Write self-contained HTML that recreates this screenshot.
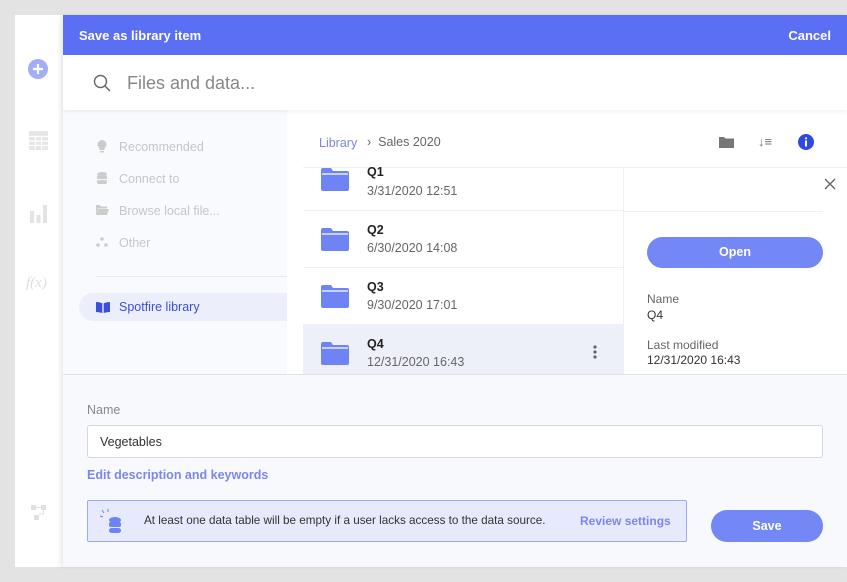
<!DOCTYPE html>
<html><head><meta charset="utf-8"><style>
*{box-sizing:border-box;margin:0;padding:0}
body{width:847px;height:582px;background:#e3e3e3;font-family:"Liberation Sans",Arial,sans-serif;position:relative;overflow:hidden}
.abs{position:absolute}
.side{left:15px;top:15px;width:48px;height:552px;background:#fff}
.dlg{left:63px;top:15px;width:784px;height:552px;background:#fff;box-shadow:-3px 0 4px rgba(0,0,0,.08)}
.hdr{left:0;top:0;width:784px;height:40px;background:#5b6ff5;color:#fff;font-size:13px;font-weight:bold}
.nav{left:0;top:95px;width:224px;height:264px;background:#f9fafe}
.navi{position:absolute;left:33px;font-size:12.5px;color:#c4c6cc}
.row{position:absolute;left:240px;width:320px;height:57px;border-bottom:1px solid #eef0f4}
.row .t{position:absolute;left:64px;top:12px;font-size:12.5px;color:#222;font-weight:bold}
.row .d{position:absolute;left:64px;top:30px;font-size:12.5px;color:#666}
.row svg{position:absolute;left:18px;top:17px}
.bot{left:0;top:359px;width:784px;height:193px;background:#f8f9fd;border-top:1px solid #dfe2ea}
</style></head><body>
<div class="abs side">
 <svg class="abs" style="left:13px;top:44px" width="20" height="20"><circle cx="10" cy="10" r="10" fill="#a3adf8"/><path d="M10 5v10M5 10h10" stroke="#fff" stroke-width="2.2"/></svg>
 <svg class="abs" style="left:14px;top:116px" width="19" height="19"><rect width="19" height="19" rx="1" fill="#e6e6e6"/><path d="M0 5.5h19M0 10h19M0 14.5h19M6.3 5v14M12.6 5v14" stroke="#fff" stroke-width="1.2"/></svg>
 <svg class="abs" style="left:15px;top:188px" width="17" height="20"><rect x="0" y="8" width="4" height="12" fill="#e3e3e3"/><rect x="6.5" y="12" width="4" height="8" fill="#e3e3e3"/><rect x="13" y="2" width="4" height="18" fill="#e3e3e3"/></svg>
 <div class="abs" style="left:11px;top:260px;font-style:italic;font-family:'Liberation Serif',serif;font-size:15px;color:#ddd">f(x)</div>
 <svg class="abs" style="left:16px;top:490px" width="18" height="18" fill="#e0e0e0"><rect x="0" y="0" width="5" height="5"/><rect x="10" y="0" width="5" height="5"/><rect x="3" y="10" width="5" height="5"/><path d="M5 2.5h5M12.5 5v4H8" stroke="#e0e0e0" fill="none"/></svg>
</div>
<div class="abs dlg">
 <div class="abs hdr"><span class="abs" style="left:16px;top:13px">Save as library item</span><span class="abs" style="right:16px;top:13px">Cancel</span></div>
 <div class="abs" style="left:0;top:40px;width:784px;height:55px;background:#fff;box-shadow:0 2px 4px rgba(0,0,0,.05);z-index:2">
  <svg class="abs" style="left:30px;top:19px" width="18" height="18"><circle cx="7.5" cy="7.5" r="6" stroke="#666" stroke-width="1.4" fill="none"/><path d="M12 12l5 5" stroke="#666" stroke-width="1.4"/></svg>
  <span class="abs" style="left:64px;top:18px;font-size:18px;color:#888">Files and data...</span>
 </div>
 <div class="abs nav">
  <svg class="abs" style="left:34px;top:30px" width="10" height="13" fill="#ccc"><circle cx="5" cy="4.5" r="4.5"/><rect x="2.5" y="8" width="5" height="2"/><rect x="3" y="11" width="4" height="1.5"/></svg>
  <span class="navi" style="left:56px;top:30px">Recommended</span>
  <svg class="abs" style="left:34px;top:62px" width="10" height="12" fill="#ccc"><ellipse cx="5" cy="2" rx="5" ry="2"/><rect y="3.5" width="10" height="3.5" rx="1"/><rect y="8" width="10" height="4" rx="2"/></svg>
  <span class="navi" style="left:56px;top:62px">Connect to</span>
  <svg class="abs" style="left:33px;top:95px" width="13" height="10" fill="#ccc"><path d="M0 0h4l1 1.5h6v2H2L0 10z"/><path d="M2.5 4H13L11 10H0z"/></svg>
  <span class="navi" style="left:56px;top:94px">Browse local file...</span>
  <svg class="abs" style="left:33px;top:127px" width="12" height="10" fill="#ccc"><circle cx="6" cy="2" r="1.8"/><circle cx="2" cy="8" r="1.8"/><circle cx="10" cy="8" r="1.8"/></svg>
  <span class="navi" style="left:56px;top:126px">Other</span>
  <div class="abs" style="left:33px;top:166px;width:191px;border-top:1px solid #e8eaf0"></div>
  <div class="abs" style="left:16px;top:183px;width:208px;height:28px;background:#eceefb;border-radius:14px 0 0 14px"></div>
  <svg class="abs" style="left:33px;top:192px" width="14" height="11" fill="#3c4fdc"><path d="M0 0q3 0 6.3 1.2V11Q3 10 0 10zM14 0q-3 0-6.3 1.2V11Q11 10 14 10z"/></svg>
  <span class="navi" style="left:56px;top:190px;color:#3c4fdc">Spotfire library</span>
 </div>
 <span class="abs" style="left:256px;top:121px;font-size:12.5px;color:#7b86f0">Library</span>
 <span class="abs" style="left:304px;top:120px;font-size:12.5px;color:#666">›&nbsp;&nbsp;Sales 2020</span>
 <svg class="abs" style="left:656px;top:121px" width="15" height="12" fill="#777"><path d="M0 1h5l1.5 1.5H15V12H0z"/></svg>
 <span class="abs" style="left:695px;top:119px;font-size:13px;color:#777">↓≡</span>
 <svg class="abs" style="left:735px;top:119px" width="16" height="16"><circle cx="8" cy="8" r="8" fill="#2f49e6"/><rect x="7" y="6.5" width="2" height="6" fill="#fff"/><circle cx="8" cy="4.3" r="1.1" fill="#fff"/></svg>
 <div class="abs" style="left:240px;top:152px;width:544px;border-top:1px solid #eef0f4"></div>
 <div class="row" style="top:139px;height:57px"><svg width="28" height="23" style="top:14px"><path d="M0 2a2 2 0 012-2h8l2 3h14a2 2 0 012 2v16a2 2 0 01-2 2H2a2 2 0 01-2-2z" fill="#6e84f5"/><path d="M1 6h26" stroke="#fff" stroke-width="1.3"/></svg><span class="t" style="top:11px">Q1</span><span class="d" style="top:30px">3/31/2020 12:51</span></div>
 <div class="row" style="top:196px"><svg width="28" height="23"><path d="M0 2a2 2 0 012-2h8l2 3h14a2 2 0 012 2v16a2 2 0 01-2 2H2a2 2 0 01-2-2z" fill="#6e84f5"/><path d="M1 6h26" stroke="#fff" stroke-width="1.3"/></svg><span class="t">Q2</span><span class="d">6/30/2020 14:08</span></div>
 <div class="row" style="top:253px"><svg width="28" height="23"><path d="M0 2a2 2 0 012-2h8l2 3h14a2 2 0 012 2v16a2 2 0 01-2 2H2a2 2 0 01-2-2z" fill="#6e84f5"/><path d="M1 6h26" stroke="#fff" stroke-width="1.3"/></svg><span class="t">Q3</span><span class="d">9/30/2020 17:01</span></div>
 <div class="row" style="top:310px;height:49px;background:#eef0f9;border:none"><svg width="28" height="23"><path d="M0 2a2 2 0 012-2h8l2 3h14a2 2 0 012 2v16a2 2 0 01-2 2H2a2 2 0 01-2-2z" fill="#6e84f5"/><path d="M1 6h26" stroke="#fff" stroke-width="1.3"/></svg><span class="t">Q4</span><span class="d">12/31/2020 16:43</span>
  <svg class="abs" style="left:290px;top:20px" width="4" height="14" fill="#666"><circle cx="2" cy="2" r="1.6"/><circle cx="2" cy="7" r="1.6"/><circle cx="2" cy="12" r="1.6"/></svg></div>
 <div class="abs" style="left:560px;top:152px;height:207px;border-left:1px solid #eef0f4"></div>
 <div class="abs" style="left:560px;top:196px;width:200px;border-top:1px solid #eef0f4"></div>
 <svg class="abs" style="left:761px;top:163px" width="12" height="12"><path d="M1 1l10 10M11 1L1 11" stroke="#666" stroke-width="1.4"/></svg>
 <div class="abs" style="left:584px;top:222px;width:176px;height:31px;border-radius:16px;background:#7387f5;color:#fff;font-weight:bold;font-size:12.5px;text-align:center;line-height:31px">Open</div>
 <span class="abs" style="left:584px;top:277px;font-size:12px;color:#666">Name</span>
 <span class="abs" style="left:584px;top:293px;font-size:12px;color:#333">Q4</span>
 <span class="abs" style="left:584px;top:323px;font-size:12px;color:#666">Last modified</span>
 <span class="abs" style="left:584px;top:338px;font-size:12px;color:#333">12/31/2020 16:43</span>
 <div class="abs bot">
  <span class="abs" style="left:24px;top:28px;font-size:12.5px;color:#888">Name</span>
  <div class="abs" style="left:24px;top:50px;width:736px;height:33px;background:#fff;border:1px solid #d5d8e0;border-radius:3px;font-size:12.5px;color:#333;padding:9px 0 0 12px">Vegetables</div>
  <span class="abs" style="left:24px;top:93px;font-size:12.5px;color:#7b86f0;font-weight:bold">Edit description and keywords</span>
  <div class="abs" style="left:24px;top:125px;width:600px;height:42px;background:#e6eafc;border:1px solid #9ca9f4;border-radius:2px">
   <svg class="abs" style="left:12px;top:8px" width="24" height="26" fill="#6e84f5"><path d="M2 1l2 3M8 0v3M0 7l3 1" stroke="#6e84f5"/><ellipse cx="15" cy="11" rx="6" ry="3"/><rect x="9" y="13" width="12" height="5" rx="2"/><rect x="9" y="19" width="12" height="5" rx="2.5"/></svg>
   <span class="abs" style="left:56px;top:13px;font-size:11.7px;color:#333">At least one data table will be empty if a user lacks access to the data source.</span>
   <span class="abs" style="left:492px;top:13px;font-size:12px;color:#7b86f0;font-weight:bold">Review settings</span>
  </div>
  <div class="abs" style="left:648px;top:135px;width:112px;height:32px;border-radius:16px;background:#7387f5;color:#fff;font-weight:bold;font-size:12.5px;text-align:center;line-height:32px">Save</div>
 </div>
</div>
</body></html>
